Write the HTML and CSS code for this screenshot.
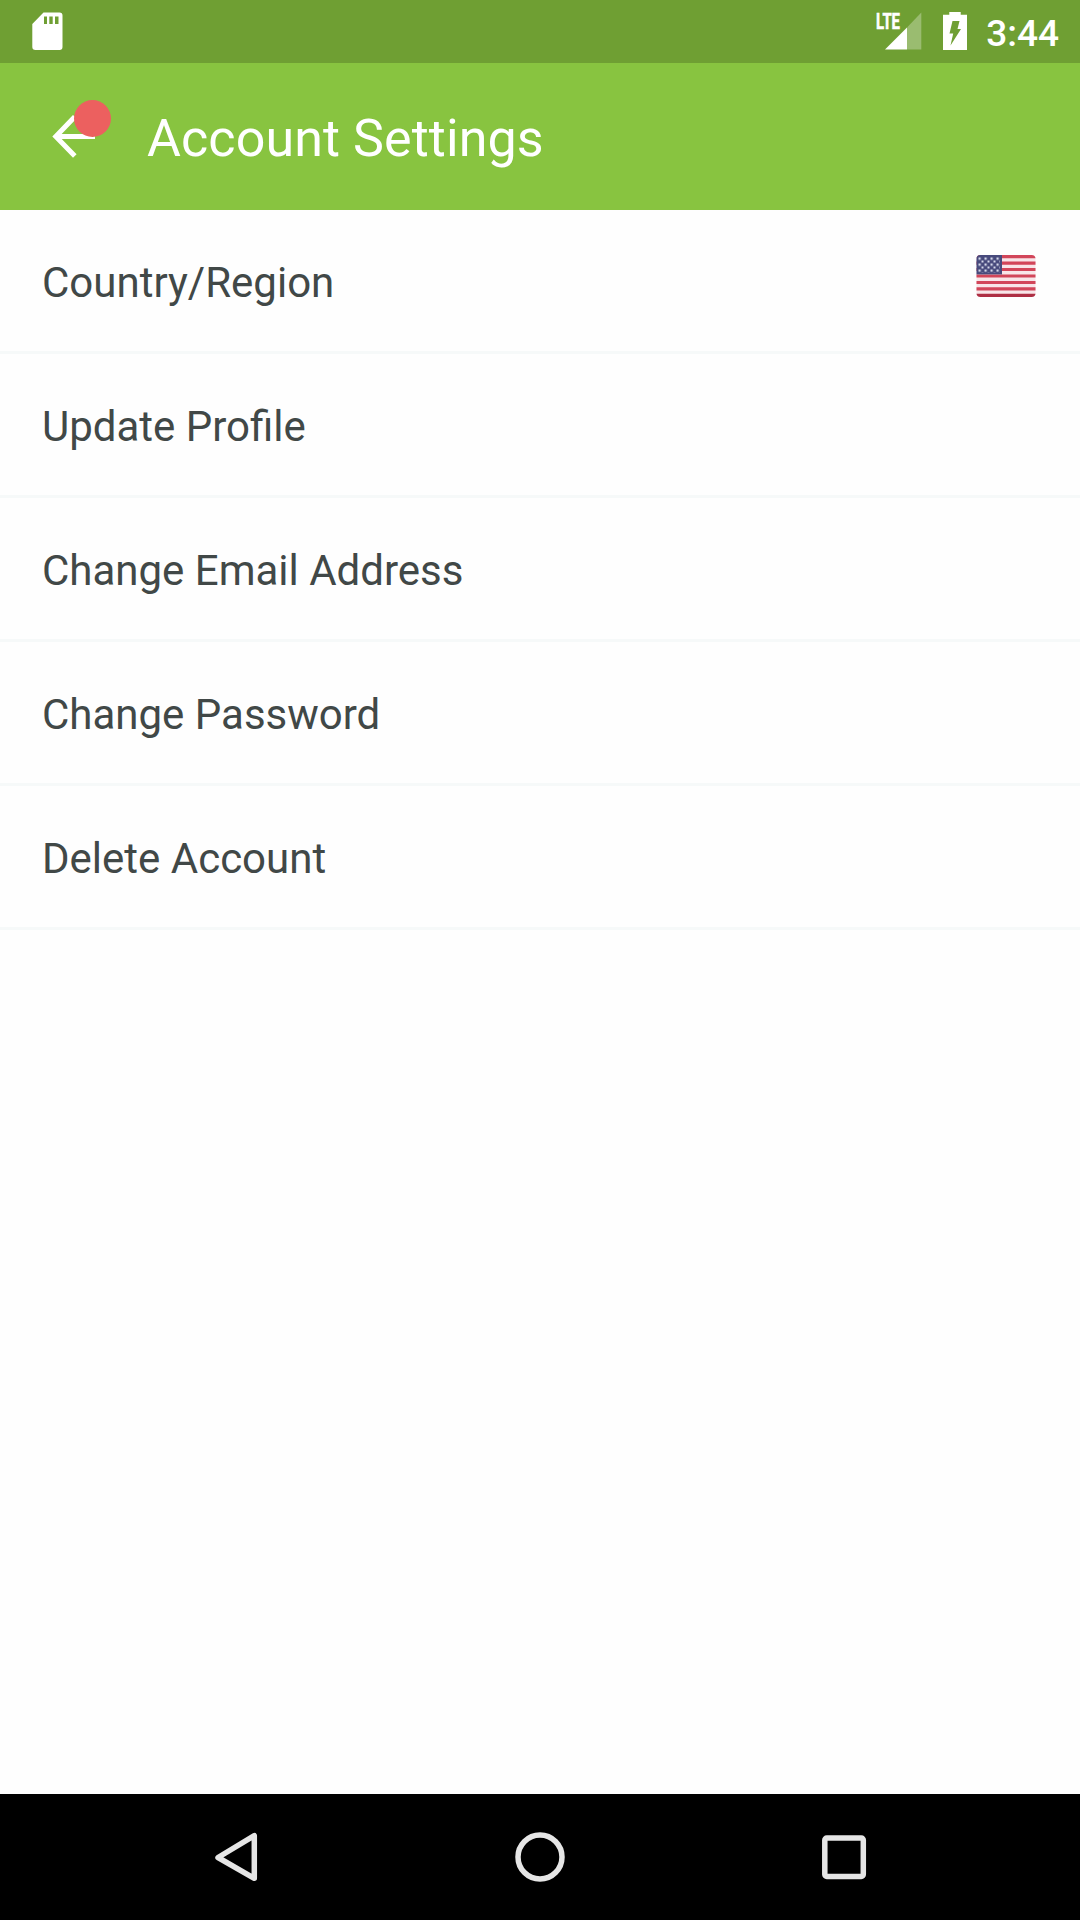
FILE: index.html
```html
<!DOCTYPE html>
<html lang="en">
<head>
<meta charset="utf-8">
<title>Account Settings</title>
<link rel="stylesheet" href="styles.css">
</head>
<body>
<div class="screen">
  <div class="status-bar">
    <svg class="sd-icon" width="31" height="39" viewBox="0 0 31 39">
      <path fill="#fff" fill-rule="evenodd" d="M11.5 .5H27.500Q30.500 .5 30.500 3.500V35Q30.500 38 27.500 38H3.500Q.3 38 .3 35V12ZM12 4.500V12H15V4.500ZM17.300 4.500V12H20.700V4.500ZM23 4.500V12H26.500V4.500Z"/>
    </svg>
    <div class="status-right">
      <svg class="signal" width="50" height="46" viewBox="-4 -8 50 46">
        <path fill="#fff" fill-opacity=".3" d="M31 15.500L45.300 .5V37.500H31Z"/>
        <path fill="#fff" d="M9 37.500L31 15.500V37.500Z"/>
        <text class="lte" x="0" y="17.300" textLength="24" lengthAdjust="spacingAndGlyphs">LTE</text>
      </svg>
      <svg class="battery" width="24" height="38" viewBox="0 0 24 38">
        <path fill="#fff" fill-rule="evenodd" d="M6.300 0H17.700V2.800H24V38H0V2.800H6.300ZM9.500 9H16.500L14.500 17H18L7.500 33.500L10.200 21.500H6.500Z"/>
      </svg>
      <span class="clock">3:44</span>
    </div>
  </div>
  <header class="app-bar">
    <div class="back">
      <svg width="44" height="44" viewBox="0 0 44 44">
        <path fill="none" stroke="#fff" stroke-width="5" d="M22.800 1.700L3.800 21.500L22.800 41M3.300 21.500H43"/>
      </svg>
      <span class="badge"></span>
    </div>
    <h1 class="title">Account Settings</h1>
  </header>
  <ul class="list">
    <li class="row"><span>Country/Region</span>
      <svg class="flag" width="60" height="42" viewBox="0 0 60 42">
        <defs>
          <clipPath id="flag-shape"><rect x=".5" width="59" height="42" rx="4"/></clipPath>
          <pattern id="stars" width="6" height="6" patternUnits="userSpaceOnUse" x="1.500" y="1.500">
            <path fill="#d5d8ea" d="M1 1h2.200v2.200H1zM4 4h2.200v2.200H4z"/>
          </pattern>
        </defs>
        <g clip-path="url(#flag-shape)">
          <rect width="60" height="42" fill="#f8e6e9"/>
          <path stroke="#d2465a" stroke-width="3.230" d="M0 1.600H60M0 8.100H60M0 14.500H60M0 21H60M0 27.500H60M0 33.900H60"/>
          <path stroke="#ae2f44" stroke-width="3.230" d="M0 40.400H60"/>
          <rect width="26" height="19.400" fill="#474a7c"/>
          <rect x="2" y="2" width="22" height="15.500" fill="url(#stars)"/>
        </g>
      </svg>
    </li>
    <li class="row"><span>Update Profile</span></li>
    <li class="row"><span>Change Email Address</span></li>
    <li class="row"><span>Change Password</span></li>
    <li class="row"><span>Delete Account</span></li>
  </ul>
  <nav class="nav-bar">
    <svg width="50" height="50" viewBox="0 0 50 50"><path class="nav-shape" stroke-linejoin="round" d="M43.300 3.700V46.300L7 25.500Z"/></svg>
    <svg width="50" height="50" viewBox="0 0 50 50"><circle class="nav-shape" cx="25" cy="25" r="22"/></svg>
    <svg width="50" height="50" viewBox="0 0 50 50"><rect class="nav-shape" x="5.800" y="6" width="38.500" height="38.500" rx="2"/></svg>
  </nav>
</div>
</body>
</html>
```
FILE: styles.css
```css
* { box-sizing: border-box; }

body {
  margin: 0;
  font-family: Roboto, "Liberation Sans", sans-serif;
}

.screen {
  display: flex;
  flex-direction: column;
  width: 1080px;
  height: 1920px;
  background: #fefefe;
}

svg { display: block; }

.status-bar {
  display: flex;
  justify-content: space-between;
  height: 63px;
  padding: 12px 21px 0 32px;
  background: #6f9f33;
}

.status-right {
  display: flex;
  align-items: flex-start;
}

.signal {
  margin-top: -8px;
  overflow: visible;
}

.battery { margin: 0 19px 0 21px; }

.lte {
  font: 700 21.500px Roboto, sans-serif;
  fill: #fff;
  stroke: #fff;
  stroke-width: .6px;
}

.clock {
  color: #fff;
  font-size: 37px;
  font-weight: 500;
  line-height: 44px;
}

.app-bar {
  display: flex;
  align-items: center;
  height: 147px;
  padding-left: 52px;
  background: #88c440;
}

.back { position: relative; }

.badge {
  position: absolute;
  left: 22px;
  top: -15px;
  width: 37px;
  height: 37px;
  border-radius: 50%;
  background: #ec605f;
}

.title {
  margin: 0 0 0 51px;
  padding-top: 4px;
  color: #fff;
  font-size: 52px;
  font-weight: 400;
  letter-spacing: .1px;
}

.list {
  flex: 1;
  margin: 0;
  padding: 0;
  list-style: none;
}

.row {
  display: flex;
  align-items: center;
  justify-content: space-between;
  height: 144px;
  padding: 4px 44px 0 42px;
  border-bottom: 3px solid #f6f9f9;
  color: #414847;
  font-size: 42px;
}

.flag { margin-top: -13px; }

.nav-bar {
  display: flex;
  align-items: center;
  justify-content: space-between;
  height: 126px;
  padding: 0 211px;
  background: #000;
}

.nav-shape {
  fill: none;
  stroke: #e6e6e6;
  stroke-width: 5.500px;
}
```
